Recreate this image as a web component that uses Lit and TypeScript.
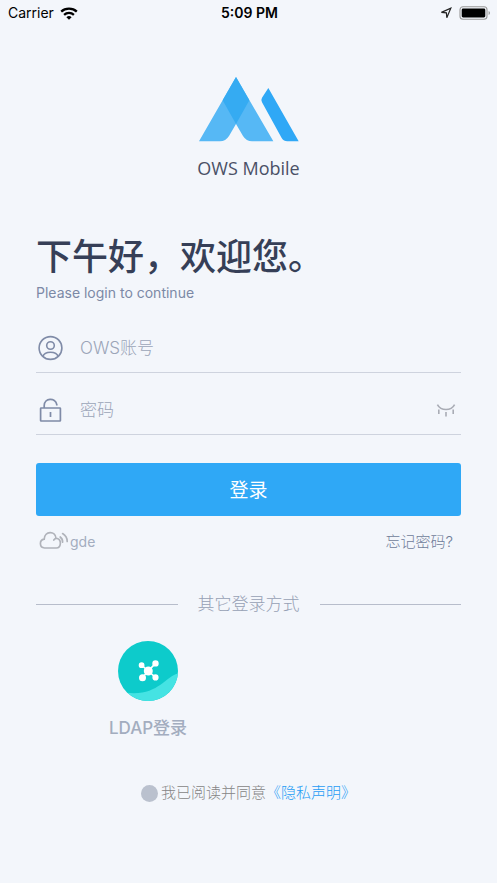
import { LitElement, html, css } from "lit";
import { customElement, state } from "lit/decorators.js";

@customElement("status-bar")
class StatusBar extends LitElement {
  static styles = css`
    :host {
      display: grid;
      grid-template-columns: 1fr auto 1fr;
      align-items: center;
      height: 26px;
      padding: 0 6px 0 8px;
      color: #000;
      font: 14px/26px Inter, "Liberation Sans", sans-serif;
    }
    .side {
      display: flex;
      align-items: center;
      gap: 6px;
    }
    .end {
      justify-content: flex-end;
      gap: 7px;
    }
    .time {
      font-weight: 600;
    }
    svg {
      display: block;
    }
  `;

  render() {
    return html`
      <div class="side">
        <span>Carrier</span>
        <svg width="18" height="13" viewBox="0 0 18 13" aria-label="Wi-Fi" fill="none" stroke="#000" stroke-width="2.3">
          <path d="M1.2 4.7C5.4 .7 12.6 .7 16.8 4.7" />
          <path d="M4.1 7.8C6.9 5.2 11.1 5.2 13.9 7.8" />
          <path d="M6.4 10.2Q9 7.9 11.6 10.2L9 12.8Z" fill="#000" stroke="none" />
        </svg>
      </div>
      <span class="time">5:09 PM</span>
      <div class="side end">
        <svg width="12" height="12" viewBox="0 0 12 12" aria-label="Location" fill="none" stroke="#222" stroke-width="1.2" stroke-linejoin="miter">
          <path d="M1.4 5.4L10.8 1.2L6.8 10.8L6.4 5.8Z" />
        </svg>
        <svg width="32" height="14" viewBox="0 0 32 14" aria-label="Battery">
          <rect x="1" y=".8" width="27" height="12.4" rx="3" fill="none" stroke="#999" stroke-width="1.1" />
          <rect x="2.7" y="2.5" width="23.6" height="9" rx="1.4" />
          <path d="M29.6 5Q31 5.4 31 7T29.6 9Z" fill="#999" />
        </svg>
      </div>
    `;
  }
}

@customElement("app-root")
class AppRoot extends LitElement {
  @state() private showPassword = false;

  static styles = css`
    :host {
      display: block;
      min-height: 100vh;
      background: #f3f6fb;
      color: #a3adbf;
      font-family: Inter, "Noto Sans CJK SC", sans-serif;
    }
    * {
      box-sizing: border-box;
    }
    svg {
      display: block;
      flex: none;
    }
    a {
      text-decoration: none;
    }
    button {
      border: 0;
      padding: 0;
      background: none;
      color: inherit;
      font: inherit;
      cursor: pointer;
    }
    main {
      display: flex;
      flex-direction: column;
      padding: 51px 36px 64px;
    }
    .brand {
      display: flex;
      flex-direction: column;
      align-items: center;
      gap: 14px;
      color: #4a5066;
      font: 18px/24px "Open Sans", "Noto Sans", sans-serif;
    }
    h1 {
      margin: 51px 0 0;
      color: #363f57;
      font-size: 36px;
      line-height: 52px;
      font-weight: 500;
    }
    .lead {
      margin: 0;
      color: #7c89a6;
      font-size: 14px;
      line-height: 20px;
    }
    form {
      display: flex;
      flex-direction: column;
      margin-top: 21px;
    }
    .field {
      display: flex;
      align-items: center;
      gap: 16px;
      height: 49px;
      border-bottom: 1px solid #ced3de;
    }
    .field + .field {
      margin-top: 13px;
    }
    .field input {
      flex: 1;
      min-width: 0;
      border: 0;
      padding: 0;
      outline: 0;
      background: none;
      color: #363f57;
      font: 300 17px/24px Inter, "Noto Sans CJK SC", sans-serif;
    }
    .field input::placeholder {
      color: #9ba5b8;
      opacity: 1;
    }
    .reveal {
      margin-right: 5px;
    }
    .submit {
      height: 53px;
      margin-top: 28px;
      padding-top: 2px;
      border-radius: 3px;
      background: #2fa8f6;
      color: #fff;
      font-size: 19px;
      line-height: 28px;
    }
    .links {
      display: flex;
      justify-content: space-between;
      align-items: center;
      margin-top: 15px;
      padding: 0 8px 0 3px;
      font-size: 14px;
      line-height: 22px;
    }
    .links button {
      display: flex;
      align-items: center;
      gap: 1px;
    }
    .links a {
      color: #6f7c99;
      font-size: 15px;
      font-weight: 300;
    }
    .divider {
      display: flex;
      align-items: center;
      gap: 20px;
      margin-top: 39px;
      color: #96a0b4;
      font-size: 17px;
      line-height: 24px;
      font-weight: 300;
    }
    .divider::before,
    .divider::after {
      content: "";
      flex: 1;
      height: 1px;
      background: #b7bdcb;
    }
    .methods {
      display: grid;
      grid-template-columns: 224px;
      margin-top: 25px;
      font-size: 17px;
      line-height: 24px;
    }
    .method {
      display: flex;
      flex-direction: column;
      align-items: center;
      gap: 15px;
      font-weight: 500;
    }
    .agree {
      display: flex;
      justify-content: center;
      align-items: center;
      margin-top: 42px;
      color: #858585;
      font-size: 15px;
      line-height: 22px;
      font-weight: 300;
    }
    .agree label {
      display: flex;
      align-items: center;
      gap: 3px;
    }
    .agree input {
      appearance: none;
      width: 17px;
      height: 17px;
      margin: 0;
      border-radius: 50%;
      background: #bac1ce;
    }
    .agree input:checked {
      background: #2fa8f6;
    }
    .agree a {
      color: #1f9cf5;
    }
  `;

  private toggle() {
    this.showPassword = !this.showPassword;
  }

  render() {
    return html`
      <status-bar></status-bar>
      <main>
        <div class="brand">
          <svg width="100" height="65" viewBox="57 37 300 195" aria-hidden="true">
            <path d="M168 37L57 230H120Q137 230 147 214L168 178L189 214Q199 230 216 230H280Z" fill="#56b8f5" />
            <path d="M168 37L208 107L168 178L128 107Z" fill="#35abf2" />
            <path d="M265 70L356 230H322Q311 230 305 220L246 113Q242 106 246 99Z" fill="#2fa8f6" />
          </svg>
          <span>OWS Mobile</span>
        </div>

        <h1>下午好，欢迎您。</h1>
        <p class="lead">Please login to continue</p>

        <form @submit=${(e: Event) => e.preventDefault()}>
          <label class="field">
            <svg width="28" height="28" viewBox="0 0 28 28" aria-hidden="true" fill="none" stroke="#7f8ba7" stroke-width="1.6">
              <circle cx="14.5" cy="14" r="11.4" />
              <circle cx="14.5" cy="11.5" r="3.8" />
              <path d="M7 22.4C8.4 16.8 20.6 16.8 22 22.4" />
            </svg>
            <input type="text" placeholder="OWS账号" aria-label="OWS账号" />
          </label>
          <div class="field">
            <svg width="28" height="28" viewBox="0 0 28 28" aria-hidden="true" fill="none" stroke="#7f8ba7" stroke-width="1.7">
              <rect x="4.6" y="12" width="19.8" height="13" rx=".6" />
              <path d="M8.2 12V9.6C8.2 1.6 19.4 1.2 20.8 8.6V9.6M14.5 16V21" />
            </svg>
            <input type=${this.showPassword ? "text" : "password"} placeholder="密码" aria-label="密码" />
            <button class="reveal" type="button" aria-label="显示密码" @click=${this.toggle}>
              <svg width="20" height="16" viewBox="0 0 20 16" fill="none" stroke="#a9acb5" stroke-width="1.6">
                <path d="M1.4 2.6C5 9.2 15 9.2 18.6 2.6M2.8 7.6V12M10 10V14.6M17.2 7.6V12" />
              </svg>
            </button>
          </div>
          <button class="submit" type="submit">登录</button>
        </form>

        <div class="links">
          <button type="button">
            <svg width="30" height="22" viewBox="0 0 30 22" aria-hidden="true" fill="none" stroke="#b0b3ba" stroke-width="1.7" stroke-linecap="round">
              <path d="M14.8 9C15.6 7.9 17 7.2 18.2 7.5C22.8 8.8 22.2 16.9 17.4 17H5.6C.2 16.6 0 9 5.2 8.2C5.6 -.2 16.4 -.4 17 7.3" />
              <path d="M21.2 6Q23.8 8 23.6 11.2M23.6 2.6Q28.2 5.4 28.2 10.4" />
            </svg>
            <span>gde</span>
          </button>
          <a href="#forgot">忘记密码?</a>
        </div>

        <div class="divider">其它登录方式</div>

        <div class="methods">
          <button class="method" type="button">
            <svg width="60" height="60" viewBox="0 0 60 60" aria-hidden="true">
              <circle cx="30" cy="30" r="30" fill="#0dcbcb" />
              <path d="M9.4 51.8C39 55 47 36 59.8 32.4A30 30 0 0 1 9.4 51.8Z" fill="#45e3e3" />
              <g fill="#fff" stroke="#fff" stroke-width="1.6">
                <path d="M30.3 30L37.4 22.4M30.3 30L23.5 24.2M30.3 30L24.3 36.6M30.3 30L37.4 36.4" />
                <circle cx="30.3" cy="30" r="3.7" />
                <circle cx="37.5" cy="22.4" r="2.4" />
                <circle cx="23.6" cy="24.2" r="2.1" />
                <circle cx="24.5" cy="36.8" r="2.7" />
                <circle cx="37.5" cy="36.4" r="2.3" />
              </g>
            </svg>
            <span>LDAP登录</span>
          </button>
        </div>

        <div class="agree">
          <label><input type="checkbox" />我已阅读并同意</label>
          <a href="#privacy">《隐私声明》</a>
        </div>
      </main>
    `;
  }
}
